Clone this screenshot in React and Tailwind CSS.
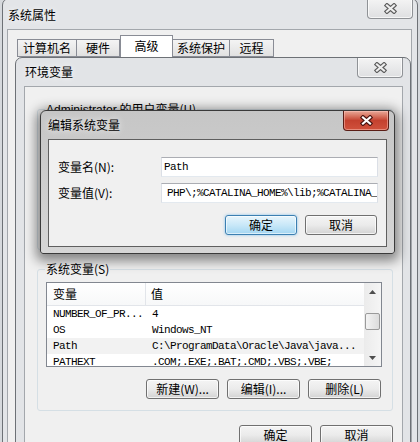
import React from "react";

const sysVars = [
  { name: "NUMBER_OF_PR...", value: "4" },
  { name: "OS", value: "Windows_NT" },
  { name: "Path", value: "C:\\ProgramData\\Oracle\\Java\\java...", hl: true },
  { name: "PATHEXT", value: ".COM;.EXE;.BAT;.CMD;.VBS;.VBE;" },
];

const tabs = [
  { label: "计算机名", w: "w-[60px]" },
  { label: "硬件", w: "w-[44px]" },
  { label: "高级", w: "w-[53px]", active: true },
  { label: "系统保护", w: "w-[58px]" },
  { label: "远程", w: "w-[45px]" },
];

// Win7 caption close glyph: light X with dark rim
function CloseGlyph({ fill, edge }) {
  return (
    <svg width="13" height="11" viewBox="0 0 13 11">
      <path d="M3 2.5 L10 8.5 M10 2.5 L3 8.5" stroke={edge} strokeWidth="4.4" strokeLinecap="square" fill="none" />
      <path d="M3 2.5 L10 8.5 M10 2.5 L3 8.5" stroke={fill} strokeWidth="2.2" strokeLinecap="square" fill="none" />
    </svg>
  );
}

function CloseButton({ red, className = "" }) {
  return (
    <div
      className={`w-[46px] h-[20px] rounded-b-[4px] border border-t-0 flex items-center justify-center ${
        red
          ? "border-[#5a1d16] bg-gradient-to-b from-[#e8a898] via-[#c4412f] to-[#d0513c] shadow-[inset_0_0_0_1px_rgba(255,200,190,0.5)]"
          : "border-[#8f9296] bg-gradient-to-b from-[#f4f4f4] to-[#dedfe1] shadow-[inset_0_0_0_1px_rgba(255,255,255,0.7)]"
      } ${className}`}
    >
      {red ? <CloseGlyph fill="#ffffff" edge="#4a1410" /> : <CloseGlyph fill="#eeeeee" edge="#5c5c5c" />}
    </div>
  );
}

function Button({ children, focused, className = "" }) {
  return (
    <div
      className={`h-[20px] rounded-[3px] border flex items-center justify-center text-[12px] leading-none ${
        focused
          ? "border-[#3c7fb1] bg-gradient-to-b from-[#e8f5fc] via-[#c9e8f8] to-[#a3d6f2] shadow-[inset_0_0_0_1px_rgba(255,255,255,0.6),0_0_3px_rgba(60,160,230,0.6)]"
          : "border-[#707070] bg-gradient-to-b from-[#f4f4f4] via-[#ebebeb] to-[#d3d3d3] shadow-[inset_0_0_0_1px_rgba(255,255,255,0.7)]"
      } ${className}`}
    >
      {children}
    </div>
  );
}

function Triangle({ up }) {
  return (
    <svg width="7" height="4" viewBox="0 0 7 4">
      <path d={up ? "M0 4 L3.5 0 L7 4 Z" : "M0 0 L3.5 4 L7 0 Z"} fill="#4d4d4d" />
    </svg>
  );
}

function SystemProperties() {
  return (
    <div className="absolute left-[2px] top-[-2px] w-[416px] h-[460px] rounded-t-[7px] border border-[#6d7176] bg-[#e3e5e8] flex flex-col">
      <div className="h-[30px] flex items-start justify-between">
        <span className="mt-[8px] ml-[5px] text-[12px] leading-[16px] [text-shadow:0_0_6px_#fff]">系统属性</span>
        <CloseButton className="mr-[4px]" />
      </div>
      <div className="ml-[4px] mr-[5px] flex-1 border border-[#a3a7ac] bg-[#f0f0f0]">
        <div className="h-[27px] pl-[9px] flex items-end">
          {tabs.map((t) =>
            t.active ? (
              <div
                key={t.label}
                className={`${t.w} h-[22px] border border-b-0 border-[#898c95] bg-white flex items-start justify-center pt-[2px] text-[12px] leading-[16px] z-10`}
              >
                {t.label}
              </div>
            ) : (
              <div
                key={t.label}
                className={`${t.w} h-[18px] border border-[#898c95] -ml-px first:ml-0 bg-gradient-to-b from-[#f4f4f4] to-[#e1e1e1] flex items-center justify-center text-[12px] leading-none`}
              >
                {t.label}
              </div>
            )
          )}
        </div>
      </div>
    </div>
  );
}

function EnvWindow() {
  return (
    <div className="absolute left-[15px] top-[57px] w-[396px] h-[400px] rounded-t-[7px] border border-[#6d7176] bg-[#e2e4e7] flex flex-col">
      <div className="h-[28px] flex items-start justify-between">
        <span className="mt-[6px] ml-[9px] text-[12px] leading-[16px] [text-shadow:0_0_6px_#fff]">环境变量</span>
        <CloseButton className="mr-[7px]" />
      </div>
      <div className="ml-[8px] mr-[7px] flex-1 border border-[#a3a7ac] bg-[#f0f0f0] flex flex-col">
        <fieldset className="mt-[15px] ml-[12px] mr-[9px] h-[148px] border border-[#d5dfe5] rounded-[3px]">
          <legend className="ml-[7px] px-[1px] text-[12px] leading-[14px]">
            <span className="font-['Liberation_Sans',sans-serif]">Administrator</span> 的用户变量(U)
          </legend>
        </fieldset>

        <fieldset className="mt-[12px] ml-[12px] mr-[9px] pb-[11px] border border-[#d5dfe5] rounded-[3px] flex flex-col">
          <legend className="ml-[7px] px-[1px] text-[12px] leading-[14px]">系统变量(S)</legend>
          <div className="mt-[6px] ml-[8px] w-[336px] h-[85px] border border-[#828790] bg-white flex overflow-hidden">
            <div className="flex-1 flex flex-col">
              <div className="h-[23px] shrink-0 flex border-b border-[#e2e5ea] bg-gradient-to-b from-white to-[#f7f8f9] text-[12px] leading-none">
                <div className="w-[99px] border-r border-[#e2e5ea] flex items-center pl-[6px]">变量</div>
                <div className="flex items-center pl-[5px]">值</div>
              </div>
              {sysVars.map((v) => (
                <div
                  key={v.name}
                  className={`h-[16px] shrink-0 flex items-center font-['Liberation_Mono',monospace] text-[11px] tracking-[-0.6px] leading-none whitespace-nowrap ${
                    v.hl ? "bg-[#f2f2f2]" : ""
                  }`}
                >
                  <div className="w-[99px] pl-[6px]">{v.name}</div>
                  <div className="pl-[6px]">{v.value}</div>
                </div>
              ))}
            </div>
            <div className="w-[17px] bg-gradient-to-r from-[#ebebeb] to-[#f5f5f5] flex flex-col items-center">
              <div className="h-[17px] w-full flex items-center justify-center">
                <Triangle up />
              </div>
              <div className="flex-1 w-full px-[1px]">
                <div className="mt-[13px] h-[17px] rounded-[2px] border border-[#9a9a9a] bg-gradient-to-r from-[#f3f3f3] to-[#dcdcdc]" />
              </div>
              <div className="h-[17px] w-full flex items-center justify-center">
                <Triangle />
              </div>
            </div>
          </div>
          <div className="mt-[12px] mr-[11px] flex justify-end gap-[8px]">
            <Button className="w-[73px] h-[19px]">新建(W)...</Button>
            <Button className="w-[73px] h-[19px]">编辑(I)...</Button>
            <Button className="w-[73px] h-[19px]">删除(L)</Button>
          </div>
        </fieldset>

        <div className="mt-[14px] mr-[9px] flex justify-end gap-[8px]">
          <Button className="w-[73px]">确定</Button>
          <Button className="w-[73px]">取消</Button>
        </div>
      </div>
    </div>
  );
}

function EditDialog() {
  return (
    <div className="absolute left-[40px] top-[110px] w-[355px] h-[144px] rounded-t-[6px] rounded-b-[3px] border border-[#3a3a3a] bg-gradient-to-b from-[#c6c6c6] to-[#d6d6d6] shadow-[0_3px_12px_4px_rgba(0,0,0,0.45)] flex flex-col">
      <div className="h-[28px] flex items-start justify-between">
        <span className="mt-[6px] ml-[7px] text-[12px] leading-[16px] [text-shadow:0_0_7px_#fff]">编辑系统变量</span>
        <CloseButton red className="mr-[5px] h-[19px]" />
      </div>
      <div className="mx-[7px] h-[108px] border border-[#5f5f5f] bg-[#f0f0f0] flex flex-col">
        <div className="mt-[17px] pl-[9px] flex items-center">
          <span className="w-[103px] text-[12px] leading-none">变量名(N):</span>
          <div className="w-[217px] h-[20px] border border-[#abadb3] border-b-[#e3e9ef] border-x-[#dbdfe6] bg-white flex items-center pl-[2px] font-['Liberation_Mono',monospace] text-[11px] tracking-[-0.6px]">
            Path
          </div>
        </div>
        <div className="mt-[6px] pl-[9px] flex items-center">
          <span className="w-[103px] text-[12px] leading-none">变量值(V):</span>
          <div className="w-[217px] h-[20px] border border-[#abadb3] border-b-[#e3e9ef] border-x-[#dbdfe6] bg-white flex items-center pl-[5px] overflow-hidden whitespace-nowrap font-['Liberation_Mono',monospace] text-[11px] tracking-[-0.6px]">
            PHP\;%CATALINA_HOME%\lib;%CATALINA_
          </div>
        </div>
        <div className="mt-[12px] pr-[9px] flex justify-end gap-[8px]">
          <Button focused className="w-[72px]">确定</Button>
          <Button className="w-[72px]">取消</Button>
        </div>
      </div>
    </div>
  );
}

export default function App() {
  return (
    <div className="relative w-[420px] h-[442px] overflow-hidden bg-[#d6d9dd] font-['Noto_Sans_CJK_SC',sans-serif] text-[12px] text-black">
      <SystemProperties />
      <EnvWindow />
      <EditDialog />
    </div>
  );
}
